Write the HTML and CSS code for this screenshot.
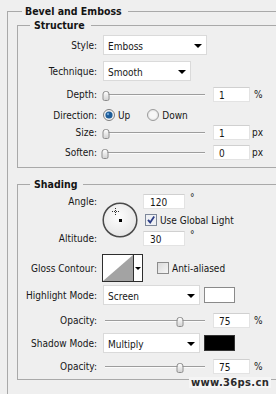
FILE: index.html
```html
<!DOCTYPE html>
<html lang="en">
<head>
  <meta charset="UTF-8">
  <title>Bevel and Emboss</title>
  <link rel="stylesheet" href="styles.css">
</head>
<body>
  <div class="panel">
    <fieldset class="group outer">
      <legend>Bevel and Emboss</legend>

      <fieldset class="group structure">
        <legend>Structure</legend>

        <div class="row sel-row first">
          <span class="lbl">Style:</span>
          <div class="select style-select"><span>Emboss</span><i class="arrow"></i></div>
        </div>

        <div class="row sel-row gap6">
          <span class="lbl">Technique:</span>
          <div class="select tech-select"><span>Smooth</span><i class="arrow"></i></div>
        </div>

        <div class="row num-row gap6">
          <span class="lbl">Depth:</span>
          <div class="slider"><div class="track"><span class="thumb" style="left:1%"></span></div></div>
          <span class="num">1</span><span class="unit">%</span>
        </div>

        <div class="row dir-row gap6">
          <span class="lbl">Direction:</span>
          <span class="radio on">
            <svg width="12" height="12" viewBox="0 0 12 12">
              <circle cx="6" cy="6" r="5.5" fill="#f3f3f3" stroke="#7c7c7c"/>
              <circle cx="6" cy="6" r="3.6" fill="#1d5d99"/>
              <circle cx="5" cy="5" r="1.2" fill="#6fa3d6"/>
            </svg>
            Up
          </span>
          <span class="radio">
            <svg width="12" height="12" viewBox="0 0 12 12">
              <circle cx="6" cy="6" r="5.5" fill="#e9e9e9" stroke="#9a9a9a"/>
              <circle cx="6" cy="6" r="3.8" fill="#f7f7f7"/>
            </svg>
            Down
          </span>
        </div>

        <div class="row num-row gap3">
          <span class="lbl">Size:</span>
          <div class="slider"><div class="track"><span class="thumb" style="left:1%"></span></div></div>
          <span class="num">1</span><span class="unit px">px</span>
        </div>

        <div class="row num-row gap5">
          <span class="lbl">Soften:</span>
          <div class="slider"><div class="track"><span class="thumb" style="left:0%"></span></div></div>
          <span class="num">0</span><span class="unit px">px</span>
        </div>
      </fieldset>

      <fieldset class="group shading">
        <legend>Shading</legend>

        <div class="angle">
          <span class="lbl a-lbl">Angle:</span>
          <svg class="dial" width="36" height="36" viewBox="0 0 36 36">
            <defs>
              <radialGradient id="dialFill" cx="45%" cy="40%" r="60%">
                <stop offset="0" stop-color="#fdfdfd"/>
                <stop offset="1" stop-color="#e6e6e6"/>
              </radialGradient>
            </defs>
            <circle cx="18" cy="18" r="16.8" fill="url(#dialFill)" stroke="#4a4a4a" stroke-width="1.5"/>
            <path d="M10 9.5h7M13.5 6v7" stroke="#333" stroke-width="1" stroke-dasharray="1 1"/>
            <rect x="17" y="17" width="3" height="3" fill="#000"/>
          </svg>
          <div class="a-val">
            <span class="num wide">120</span><span class="deg">°</span>
          </div>
          <span class="check on a-check">
            <svg width="12" height="12" viewBox="0 0 12 12">
              <rect x="0.5" y="0.5" width="11" height="11" fill="#eef0f4" stroke="#7d8799"/>
              <path d="M3 5.8l2.2 2.6L9.2 2.6" fill="none" stroke="#2c3d86" stroke-width="1.8"/>
            </svg>
            Use Global Light
          </span>
          <span class="lbl b-lbl">Altitude:</span>
          <div class="b-val">
            <span class="num wide">30</span><span class="deg">°</span>
          </div>
        </div>

        <div class="row gloss-row">
          <span class="lbl">Gloss Contour:</span>
          <div class="contour">
            <svg width="30" height="26" viewBox="0 0 30 26">
              <polygon points="0,26 30,0 30,26" fill="#a3a3a3"/>
            </svg>
            <div class="contour-btn"><i class="arrow small"></i></div>
          </div>
          <span class="check aa">
            <svg width="12" height="12" viewBox="0 0 12 12">
              <defs>
                <linearGradient id="boxFill" x1="0" y1="0" x2="1" y2="1">
                  <stop offset="0" stop-color="#d9d9d9"/>
                  <stop offset="1" stop-color="#f7f7f7"/>
                </linearGradient>
              </defs>
              <rect x="0.5" y="0.5" width="11" height="11" fill="url(#boxFill)" stroke="#8c8c8c"/>
            </svg>
            Anti-aliased
          </span>
        </div>

        <div class="row sel-row gap3">
          <span class="lbl">Highlight Mode:</span>
          <div class="select mode-select"><span>Screen</span><i class="arrow"></i></div>
          <span class="swatch white"></span>
        </div>

        <div class="row num-row gap8">
          <span class="lbl">Opacity:</span>
          <div class="slider"><div class="track"><span class="thumb" style="left:75%"></span></div></div>
          <span class="num">75</span><span class="unit">%</span>
        </div>

        <div class="row sel-row gap5">
          <span class="lbl">Shadow Mode:</span>
          <div class="select mode-select"><span>Multiply</span><i class="arrow"></i></div>
          <span class="swatch black"></span>
        </div>

        <div class="row num-row gap6">
          <span class="lbl">Opacity:</span>
          <div class="slider"><div class="track"><span class="thumb" style="left:75%"></span></div></div>
          <span class="num">75</span><span class="unit">%</span>
        </div>
      </fieldset>
    </fieldset>

    <div class="watermark">www.36ps.cn</div>
  </div>
</body>
</html>
```

FILE: styles.css
```css
html, body {
  margin: 0;
  overflow: hidden;
}
body {
  background: #efefef;
  font-family: "DejaVu Sans Condensed", "DejaVu Sans", sans-serif;
  font-size: 10px;
  color: #161616;
}
.panel {
  position: relative;
  width: 276px;
  height: 394px;
  overflow: hidden;
  padding: 4px 0 0 7px;
  box-sizing: border-box;
}

/* frames */
fieldset.group {
  margin: 0;
  padding: 0;
  min-width: 0;
  border: 1px solid #a9a9a9;
}
legend {
  font-weight: bold;
  font-size: 10.5px;
  line-height: 14px;
  margin-left: 5px;
  padding: 0 6px 0 3px;
  color: #141414;
}
.outer {
  margin-right: -30px !important;
  padding: 0 0 40px 9px !important;
}
.structure { padding-bottom: 7px !important; }
.shading {
  margin-top: 9px !important;
  padding-bottom: 5px !important;
}
.structure legend, .shading legend {
  margin-left: 12px;
  padding: 0 6px 0 4px;
}

/* rows */
.row {
  display: flex;
  align-items: center;
}
.sel-row { height: 20px; }
.num-row { height: 15px; }
.dir-row { height: 14px; }
.first { margin-top: 3px; }
.gap3 { margin-top: 3px; }
.gap5 { margin-top: 5px; }
.gap6 { margin-top: 6px; }
.gap8 { margin-top: 8px; }
.lbl {
  flex: none;
  width: 79px;
  margin-right: 6px;
  text-align: right;
  white-space: nowrap;
}

/* dropdowns */
.select {
  display: flex;
  align-items: center;
  justify-content: space-between;
  height: 20px;
  box-sizing: border-box;
  padding: 3px 4px 0 4px;
  background: #fff;
  border: 1px solid #dadada;
}
.style-select { width: 104px; }
.tech-select { width: 88px; }
.mode-select { width: 97px; }
.arrow {
  width: 0;
  height: 0;
  border-left: 4px solid transparent;
  border-right: 4px solid transparent;
  border-top: 4px solid #000;
  margin-top: -2px;
}
.arrow.small {
  border-left-width: 3px;
  border-right-width: 3px;
  border-top-width: 3px;
  margin: 0;
}

/* sliders */
.slider {
  width: 104px;
  padding: 0 2px;
  margin-right: 6px;
  box-sizing: border-box;
}
.track {
  position: relative;
  height: 1px;
  background: #9d9d9d;
  border-bottom: 1px solid #fbfbfb;
}
.thumb {
  position: absolute;
  top: -3px;
  width: 7px;
  height: 10px;
  box-sizing: border-box;
  transform: translateX(-50%);
  border: 1px solid #8c8c8c;
  border-radius: 3px 3px 2px 2px;
  background: linear-gradient(#fdfdfd, #d4d4d4);
}

/* number fields */
.num {
  flex: none;
  width: 37px;
  height: 15px;
  box-sizing: border-box;
  padding: 1px 0 0 5px;
  background: #fff;
  border: 1px solid #e3e3e3;
  border-top-color: #d0d0d0;
  line-height: 13px;
}
.num.wide {
  width: 42px;
  padding-left: 6px;
}
.unit { margin-left: 4px; }
.unit.px { margin-left: 2px; }
.deg {
  align-self: flex-start;
  margin: -2px 0 0 5px;
}

/* radios and checks */
.radio, .check {
  display: flex;
  align-items: center;
  gap: 3px;
}
.radio.on { margin-right: 17px; }

/* angle block */
.angle {
  display: grid;
  grid-template-columns: 79px 36px auto;
  grid-template-rows: 15px 14px 15px;
  column-gap: 5px;
  row-gap: 4px;
  align-items: center;
  margin-top: 3px;
}
.a-lbl { grid-row: 1; grid-column: 1; margin: 0; }
.b-lbl { grid-row: 3; grid-column: 1; margin: 0; }
.dial { grid-row: 1 / 4; grid-column: 2; }
.a-val, .b-val { display: flex; align-items: center; height: 15px; }
.a-val { grid-row: 1; grid-column: 3; }
.b-val { grid-row: 3; grid-column: 3; }
.a-check { grid-row: 2; grid-column: 3; margin-left: 2px; }

/* gloss contour */
.gloss-row {
  height: 28px;
  margin-top: 8px;
}
.gloss-row .lbl { margin-right: 5px; }
.contour {
  display: flex;
  width: 41px;
  height: 28px;
  box-sizing: border-box;
  border: 1px solid #2e2e2e;
  background: #fff;
}
.contour-btn {
  flex: 1;
  display: flex;
  align-items: center;
  justify-content: center;
  border-left: 1px solid #2e2e2e;
}
.aa { margin-left: 14px; }

/* colour swatches */
.swatch {
  width: 31px;
  height: 16px;
  box-sizing: border-box;
  margin-left: 4px;
  border: 1px solid #8a8a8a;
}
.swatch.white { background: #fff; }
.swatch.black { background: #000; border-color: #333; }

.watermark {
  position: absolute;
  left: 189px;
  top: 377px;
  padding: 0 2px;
  background: #f5f5f5;
  color: #2b2b2b;
  font-family: "DejaVu Sans", sans-serif;
  font-weight: bold;
  font-size: 10px;
  line-height: 11px;
  letter-spacing: 0.3px;
}
```
